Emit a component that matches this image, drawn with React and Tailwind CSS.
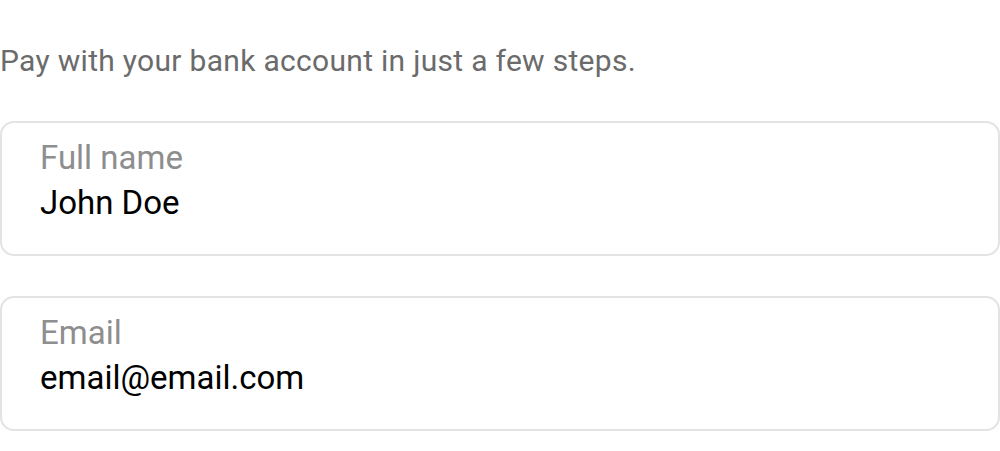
export default function App() {
  return (
    <div className="w-[1000px] h-[451px] bg-white overflow-hidden" style={{ fontFamily: 'Roboto, "Noto Sans", sans-serif' }}>
      <p className="pt-[43px] text-[30px] leading-[36px] tracking-[0.3px] text-[#6b6b6b]">
        Pay with your bank account in just a few steps.
      </p>

      <div className="mt-[42px] flex flex-col gap-[40px]">
        {/* Full name */}
        <div className="h-[135px] rounded-[14px] border-2 border-[#e3e3e3] px-[38px] pt-[12px]">
          <div className="text-[33px] leading-[45px] text-[#8e8e8e]">Full name</div>
          <div className="text-[33px] leading-[45px] text-black">John Doe</div>
        </div>

        {/* Email */}
        <div className="h-[135px] rounded-[14px] border-2 border-[#e3e3e3] px-[38px] pt-[12px]">
          <div className="text-[33px] leading-[45px] text-[#8e8e8e]">Email</div>
          <div className="text-[33px] leading-[45px] text-black">email@email.com</div>
        </div>
      </div>
    </div>
  );
}
